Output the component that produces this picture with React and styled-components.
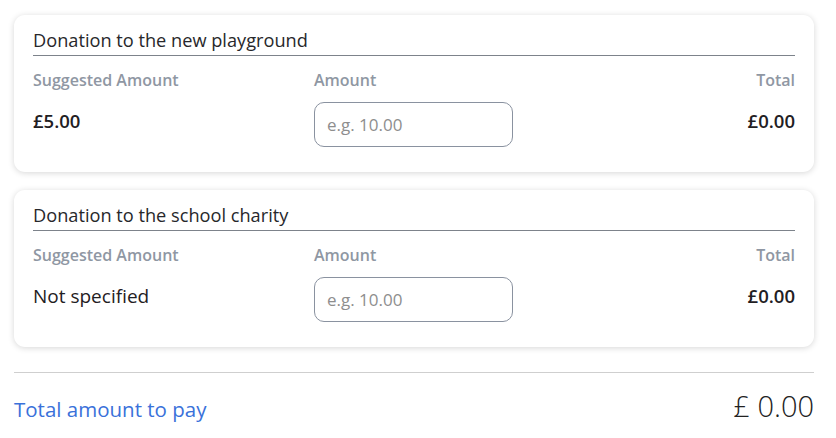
import styled, { createGlobalStyle } from 'styled-components';

const GlobalStyle = createGlobalStyle`
  * {
    box-sizing: border-box;
  }
  body {
    margin: 0;
    background: #ffffff;
    font-family: 'Open Sans', 'Noto Sans', sans-serif;
    color: #222428;
  }
`;

const donations = [
  { id: 1, title: 'Donation to the new playground', suggested: '£5.00', total: '£0.00' },
  { id: 2, title: 'Donation to the school charity', suggested: 'Not specified', total: '£0.00' },
];

function App() {
  return (
    <>
      <GlobalStyle />
      <Page>
        <CardList>
          {donations.map((d) => (
            <Card key={d.id}>
              <Title>{d.title}</Title>
              <Grid>
                <Label>Suggested Amount</Label>
                <Label>Amount</Label>
                <Label $right>Total</Label>
                <Value $plain={d.suggested === 'Not specified'}>{d.suggested}</Value>
                <AmountInput type="text" placeholder="e.g. 10.00" />
                <Value $right>{d.total}</Value>
              </Grid>
            </Card>
          ))}
        </CardList>
        <Summary>
          <SummaryLabel>Total amount to pay</SummaryLabel>
          <SummaryValue>£ 0.00</SummaryValue>
        </Summary>
      </Page>
    </>
  );
}

export default App;

const Page = styled.div`
  padding: 15px 22px 0 14px;
`;

const CardList = styled.div`
  display: flex;
  flex-direction: column;
  gap: 18px;
`;

const Card = styled.div`
  background: #fff;
  border-radius: 11px;
  box-shadow: 0 1px 6px rgba(0, 0, 0, 0.16);
  padding: 13px 19px 25px;
`;

const Title = styled.div`
  font-size: 18.2px;
  line-height: 24px;
  color: #27272b;
  padding-bottom: 3px;
  border-bottom: 1px solid #7d838b;
`;

const Grid = styled.div`
  display: grid;
  grid-template-columns: 281px 199px 1fr;
  align-items: center;
  row-gap: 11px;
  margin-top: 13px;
`;

const Label = styled.div`
  font-size: 16px;
  line-height: 22px;
  font-weight: 600;
  color: #8f97a3;
  text-align: ${(p) => (p.$right ? 'right' : 'left')};
`;

const Value = styled.div`
  font-size: ${(p) => (p.$plain ? '19px' : '18.5px')};
  line-height: 24px;
  font-weight: ${(p) => (p.$plain ? 500 : 600)};
  color: #1f2023;
  text-align: ${(p) => (p.$right ? 'right' : 'left')};
  margin-top: -8px;
`;

const AmountInput = styled.input`
  width: 199px;
  height: 45px;
  border: 1px solid #8a92a0;
  border-radius: 10px;
  padding: 0 12px;
  font-family: 'Open Sans', sans-serif;
  font-size: 17px;
  color: #333;
  outline: none;
  &::placeholder {
    color: #8e8e8e;
  }
`;

const Summary = styled.div`
  margin-top: 25px;
  border-top: 1px solid #cfcfcf;
  display: flex;
  justify-content: space-between;
  align-items: baseline;
  padding-top: 13px;
`;

const SummaryLabel = styled.div`
  font-size: 20.5px;
  font-weight: 500;
  color: #3a71da;
`;

const SummaryValue = styled.div`
  font-size: 29px;
  font-weight: 300;
  color: #222;
`;
